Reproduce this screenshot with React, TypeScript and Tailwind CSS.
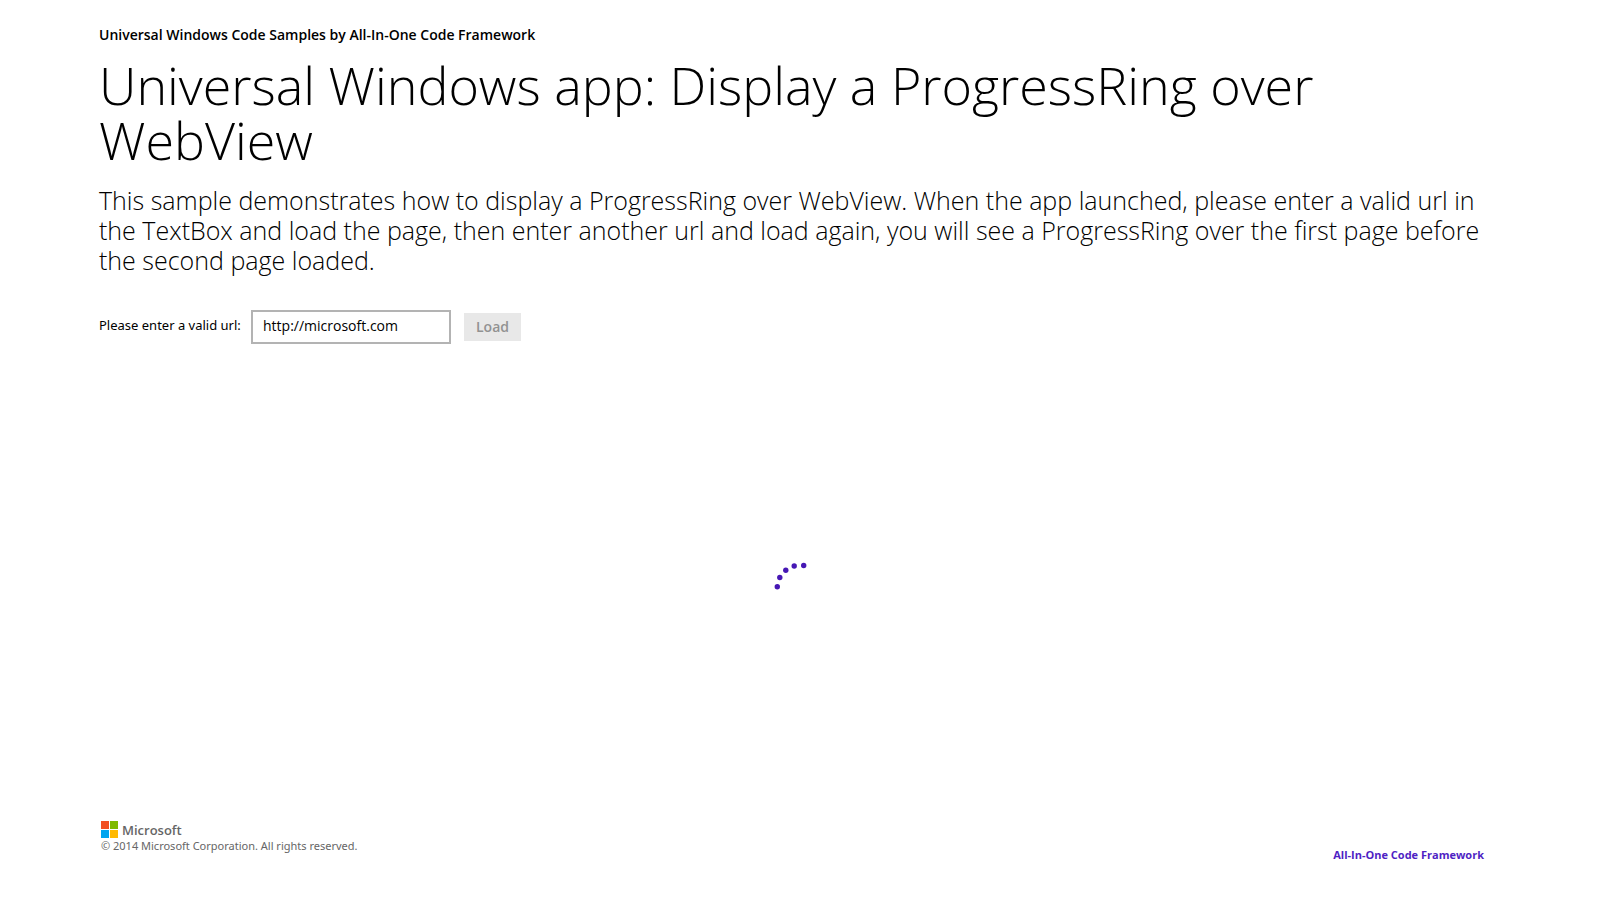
function MicrosoftLogo() {
  return (
    <svg width="17" height="17" viewBox="0 0 17 17" aria-hidden="true">
      <rect width="8" height="8" fill="#f25022" />
      <rect x="9" width="8" height="8" fill="#7fba00" />
      <rect y="9" width="8" height="8" fill="#00a4ef" />
      <rect x="9" y="9" width="8" height="8" fill="#ffb900" />
    </svg>
  );
}

function ProgressRing() {
  return (
    <svg width="60" height="60" viewBox="0 0 60 60" fill="#4617b4" role="img" aria-label="Loading">
      <circle cx="7.3" cy="36.7" r="2.7" />
      <circle cx="9.8" cy="27.5" r="2.7" />
      <circle cx="15.8" cy="20.2" r="2.7" />
      <circle cx="24.2" cy="16" r="2.7" />
      <circle cx="33.7" cy="15.5" r="2.7" />
    </svg>
  );
}

export default function App() {
  return (
    <div className="flex min-h-screen flex-col bg-white px-[99px] pt-[25px] pb-[34px] font-['Open_Sans','Noto_Sans',sans-serif] text-black">
      <header>
        <p className="text-sm leading-5 font-semibold">Universal Windows Code Samples by All-In-One Code Framework</p>
        <h1 className="mt-3 text-[52px] leading-[55px] font-light">Universal Windows app: Display a ProgressRing over WebView</h1>
        <p className="mt-[18px] text-[25px] leading-[30px] font-light">
          This sample demonstrates how to display a ProgressRing over WebView. When the app launched, please enter a valid url in the TextBox and load the page, then enter another url and load again, you will see a ProgressRing over the first page before the second page loaded.
        </p>
      </header>
      <form className="mt-[35px] flex items-center text-sm">
        <label htmlFor="url" className="w-[152px] pb-1 font-['Noto_Sans',sans-serif] text-[13px]">Please enter a valid url:</label>
        <input id="url" type="text" defaultValue="http://microsoft.com" className="h-[34px] w-[200px] border-2 border-[#b3b3b3] px-[10px] pb-[3px] outline-none" />
        <button type="button" disabled className="ml-[13px] h-7 w-[57px] bg-[#e8e8e8] font-semibold text-[#929292]">Load</button>
      </form>
      <main className="flex flex-1 items-center justify-center pb-[6px]">
        <ProgressRing />
      </main>
      <footer className="flex items-end justify-between text-[#666666]">
        <div className="pl-[2px]">
          <div className="flex items-center gap-1">
            <MicrosoftLogo />
            <span className="text-[13px] leading-4 font-semibold">Microsoft</span>
          </div>
          <p className="pb-3 font-['Noto_Sans',sans-serif] text-[11px] leading-4">© 2014 Microsoft Corporation. All rights reserved.</p>
        </div>
        <a href="#" className="mr-[17px] pb-[3px] text-[11px] leading-4 font-bold text-[#4f1fc4]">All-In-One Code Framework</a>
      </footer>
    </div>
  );
}
